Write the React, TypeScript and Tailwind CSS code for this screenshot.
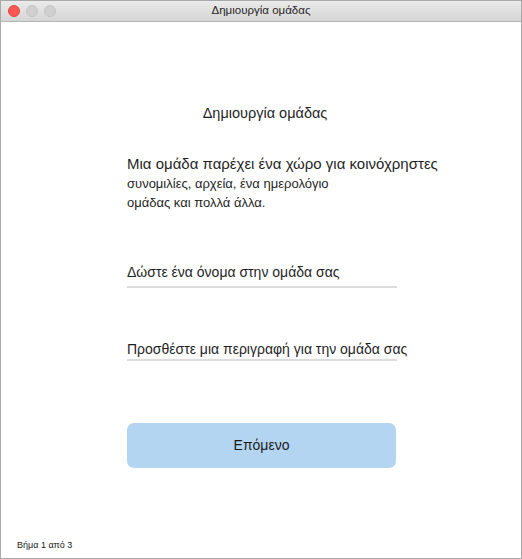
const App = () => {
    return (
        <div className="w-[522px] h-[559px] bg-white flex flex-col border border-[#a9a9a9] overflow-hidden" style={{ fontFamily: '"Liberation Sans", Arial, sans-serif' }}>
            {/* title bar */}
            <div className="h-[21px] shrink-0 relative flex items-center justify-center bg-gradient-to-b from-[#ebebeb] to-[#d5d5d5] border-b border-[#b5b5b5]">
                <div className="absolute left-[7px] top-[4px] flex gap-[6px]">
                    <span className="w-[12px] h-[12px] rounded-full bg-[#fc5753] border border-[#df4744]" />
                    <span className="w-[12px] h-[12px] rounded-full bg-[#d0d0d0] border border-[#c4c4c4]" />
                    <span className="w-[12px] h-[12px] rounded-full bg-[#d0d0d0] border border-[#c4c4c4]" />
                </div>
                <span className="text-[11.5px] text-[#262626] leading-none">Δημιουργία ομάδας</span>
            </div>

            {/* body */}
            <div className="flex-1 flex flex-col">
                <div className="flex flex-col items-center pt-[82px] pl-[8px]">
                    <h1 className="text-[14.5px] text-[#1f1f1f] leading-[18px]">Δημιουργία ομάδας</h1>
                </div>

                <div className="pl-[126px] pt-[32px] text-[#1f1f1f]">
                    <p className="text-[15px] leading-[20px]">Μια ομάδα παρέχει ένα χώρο για κοινόχρηστες</p>
                    <p className="text-[13px] leading-[19px]">
                        συνομιλίες, αρχεία, ένα ημερολόγιο
                        <br />
                        ομάδας και πολλά άλλα.
                    </p>

                    <div className="w-[270px] mt-[51px] pb-[5px] border-b-2 border-[#dcdcdc] text-[14px] leading-[18px] whitespace-nowrap">
                        Δώστε ένα όνομα στην ομάδα σας
                    </div>
                    <div className="w-[270px] mt-[52px] pb-[1px] border-b-2 border-[#dcdcdc] text-[14px] leading-[18px] whitespace-nowrap">
                        Προσθέστε μια περιγραφή για την ομάδα σας
                    </div>

                    <button className="w-[269px] h-[45px] mt-[62px] rounded-[7px] bg-[#b3d5f2] text-[14px] text-[#1a1a1a] flex items-center justify-center">
                        Επόμενο
                    </button>
                </div>

                <div className="mt-auto pl-[16px] pb-[7px] text-[9px] text-[#1a1a1a] leading-[12px]">Βήμα 1 από 3</div>
            </div>
        </div>
    )
}

export default App
